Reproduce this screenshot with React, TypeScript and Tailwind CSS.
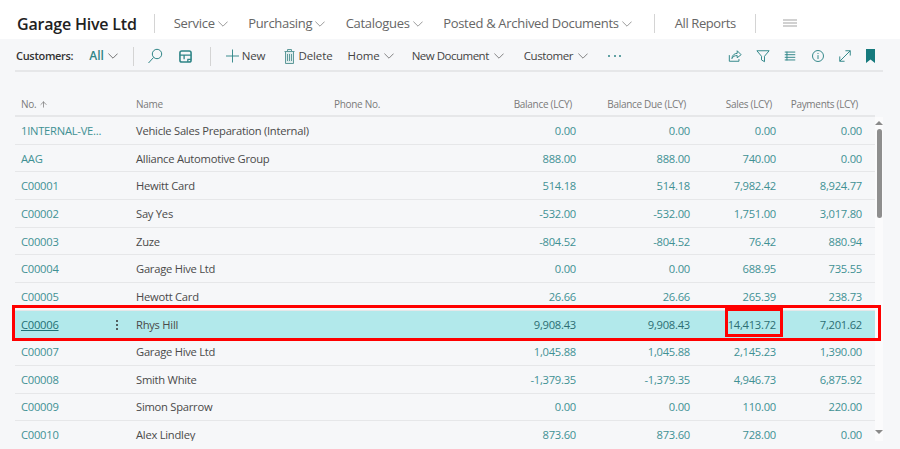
import { ArrowUp } from "lucide-react";

const rows = [
  ["1INTERNAL-VE...", "Vehicle Sales Preparation (Internal)", "0.00", "0.00", "0.00", "0.00"],
  ["AAG", "Alliance Automotive Group", "888.00", "888.00", "740.00", "0.00"],
  ["C00001", "Hewitt Card", "514.18", "514.18", "7,982.42", "8,924.77"],
  ["C00002", "Say Yes", "-532.00", "-532.00", "1,751.00", "3,017.80"],
  ["C00003", "Zuze", "-804.52", "-804.52", "76.42", "880.94"],
  ["C00004", "Garage Hive Ltd", "0.00", "0.00", "688.95", "735.55"],
  ["C00005", "Hewott Card", "26.66", "26.66", "265.39", "238.73"],
  ["C00006", "Rhys Hill", "9,908.43", "9,908.43", "14,413.72", "7,201.62"],
  ["C00007", "Garage Hive Ltd", "1,045.88", "1,045.88", "2,145.23", "1,390.00"],
  ["C00008", "Smith White", "-1,379.35", "-1,379.35", "4,946.73", "6,875.92"],
  ["C00009", "Simon Sparrow", "0.00", "0.00", "110.00", "220.00"],
  ["C00010", "Alex Lindley", "873.60", "873.60", "728.00", "0.00"],
];

const gridCols = "grid grid-cols-[121px_198px_1fr_100px_114px_86px_86px] ";

function Chev({ color = "#8f8f8f" }: { color?: string }) {
  return (
    <svg width="10" height="6" viewBox="0 0 10 6" fill="none" stroke={color} strokeWidth="0.9" className="shrink-0">
      <path d="M.4.6 5 5.2 9.6.6" />
    </svg>
  );
}

function NavItem({ label }: { label: string }) {
  return (
    <span className="flex items-center gap-[3px] text-[13px] tracking-[-0.3px] text-[#666]">
      {label}
      <Chev />
    </span>
  );
}

function Sep({ className = "" }: { className?: string }) {
  return <span className={"h-[19px] w-px shrink-0 bg-[#d4d4d4] " + className} />;
}

function ActionMenu({ label, className = "" }: { label: string; className?: string }) {
  return (
    <span className={"flex items-center " + className}>
      {label}
      <Chev color="#777" />
    </span>
  );
}

function TealIcon({ children, className = "" }: { children: React.ReactNode; className?: string }) {
  return (
    <svg width="14" height="14" viewBox="0 0 16 16" fill="none" stroke="#2f8587" strokeWidth="1.1" className={"shrink-0 " + className}>
      {children}
    </svg>
  );
}

export default function App() {
  return (
    <div className="relative h-[449px] w-[900px] overflow-hidden bg-[#f6f7f9] font-['Open_Sans',sans-serif]">
      <header className="flex h-[39px] items-center bg-white pl-[17px] pt-[8px]">
        <span className="text-[16px] font-semibold tracking-[-0.2px] text-[#212121]">Garage Hive Ltd</span>
        <Sep className="ml-[17px] mr-[19px]" />
        <div className="flex items-center gap-[20.5px]">
          <NavItem label="Service" />
          <NavItem label="Purchasing" />
          <NavItem label="Catalogues" />
          <NavItem label="Posted & Archived Documents" />
        </div>
        <Sep className="ml-[22px] mr-[20px]" />
        <span className="text-[13px] tracking-[-0.4px] text-[#666]">All Reports</span>
        <Sep className="ml-[19px] mr-[27px]" />
        <svg width="14" height="8" viewBox="0 0 14 8" stroke="#a3a3a3" strokeWidth="1" className="-mt-[1px]">
          <path d="M0 1h14M0 4h14M0 7h14" />
        </svg>
      </header>

      <div className="mx-[15px] flex h-[33px] w-[868px] items-center border-b-2 border-[#e6e7e9] pt-[3px] text-[11.5px] tracking-[-0.1px] text-[#444]">
        <span className="ml-[1px] text-[11px] font-semibold tracking-[-0.3px] text-[#333]">Customers:</span>
        <span className="ml-[16px] flex items-center gap-[4px] text-[12px] font-semibold text-[#2f8587]">
          All <Chev color="#666" />
        </span>
        <Sep className="ml-[15px]" />
        <svg width="16" height="16" viewBox="0 0 16 16" fill="none" stroke="#2f8587" className="ml-[13px] shrink-0">
          <circle cx="10" cy="6" r="4.7" />
          <path d="M6.600 9.400 1.500 15" />
        </svg>
        <svg width="13" height="13" viewBox="0 0 14 14" fill="none" stroke="#2f8587" className="ml-[16px] shrink-0">
          <rect x="1" y="1" width="12" height="12" rx="2" strokeWidth="1.7" />
          <path d="M1 5.500h12M5.500 5.500v4.500M9 10h4M9.500 10v3" strokeWidth="1.4" />
        </svg>
        <Sep className="ml-[18px]" />
        <svg width="13" height="14" viewBox="0 0 14 14" stroke="#2f8587" className="ml-[15px] shrink-0">
          <path d="M0 7h14M7 0v14" />
        </svg>
        <span className="ml-[3px]">New</span>
        <svg width="11" height="15" viewBox="0 0 11 15" fill="#dfecec" stroke="#5f9a9b" className="ml-[19px] shrink-0">
          <path d="M.5 2.500h10M3.500 2.500V.5h4v2M1.500 2.500v12h8v-12M3.500 5v7M5.500 5v7M7.500 5v7" />
        </svg>
        <span className="ml-[3px]">Delete</span>
        <ActionMenu label="Home" className="ml-[15px] gap-[4px]" />
        <ActionMenu label="New Document" className="ml-[18px] gap-[5px] tracking-[-0.5px]" />
        <ActionMenu label="Customer" className="ml-[20px] gap-[5px] tracking-[-0.4px]" />
        <span className="ml-[20px] flex gap-[3.500px]">
          <i className="size-[2px] rounded-full bg-[#2f8587]" />
          <i className="size-[2px] rounded-full bg-[#2f8587]" />
          <i className="size-[2px] rounded-full bg-[#2f8587]" />
        </span>
        <div className="ml-auto mr-[8px] flex items-center gap-[13.600px]">
          <TealIcon>
            <path d="M1.500 7v7h11v-2.500M4.500 11c0-4 3-6 6-6V2l4.500 4.500L10.500 10V7.500c-3 0-5 1-6 3.500Z" />
          </TealIcon>
          <TealIcon>
            <path d="M1 2h14L9.700 8.300V14.500L6.300 12.500V8.300Z" />
          </TealIcon>
          <TealIcon>
            <path d="M2 3.500h12M2 6.500h12M2 9.500h12M2 12.500h12M4.500 3v10" />
          </TealIcon>
          <TealIcon>
            <circle cx="8" cy="8" r="6.300" />
            <path d="M8 7v4.500M8 4.500v1.200" />
          </TealIcon>
          <TealIcon>
            <path d="M2 14 14 2M8.500 2H14v5.500M2 8.500V14h5.500" />
          </TealIcon>
          <svg width="9" height="14" viewBox="0 0 9 14" fill="#167a7d">
            <path d="M0 0h9v14L4.500 10.500 0 14Z" />
          </svg>
        </div>
      </div>

      <div className="mx-[15px] mt-[20px] w-[860px]">
        <div className={gridCols + "h-[25px] items-center border-b-2 border-[#e6e7e9] pt-[2px] text-[10px] tracking-[-0.3px] text-[#7a7a7a]"}>
          <span className="flex items-center gap-[3px] pl-[6px]">
            No. <ArrowUp size={9} strokeWidth={2} />
          </span>
          <span>Name</span>
          <span>Phone No.</span>
          <span className="pr-[17px] text-right">Balance (LCY)</span>
          <span className="pr-[17px] text-right">Balance Due (LCY)</span>
          <span className="pr-[17px] text-right">Sales (LCY)</span>
          <span className="pr-[17px] text-right">Payments (LCY)</span>
        </div>
      </div>

      <div className="ml-[15px] flex h-[324px] w-[868px]">
        <div className="w-[860px] shrink-0 overflow-hidden text-[11.2px] tracking-[-0.25px]">
          {rows.map((r) => {
            const selected = r[0] === "C00006";
            return (
              <div
                key={r[0]}
                className={
                  gridCols +
                  "h-[27.67px] items-center border-b pt-[2px] " +
                  (selected ? "border-transparent bg-[#b2e9eb] text-[#2c6e73]" : "border-[#e6e7e9] text-[#3f9194]")
                }
              >
                <span className={"flex items-center justify-between pl-[6px] pr-[18px] " + (selected ? "text-[#1f7175]" : "")}>
                  <span className={selected ? "underline" : ""}>{r[0]}</span>
                  {selected && (
                    <span className="flex flex-col gap-[2px]">
                      <i className="size-[2px] rounded-full bg-[#333]" />
                      <i className="size-[2px] rounded-full bg-[#333]" />
                      <i className="size-[2px] rounded-full bg-[#333]" />
                    </span>
                  )}
                </span>
                <span className="text-[#4a4a4a]">{r[1]}</span>
                <span />
                {r.slice(2).map((v, i) => (
                  <span key={i} className="pr-[13px] text-right">
                    {v}
                  </span>
                ))}
              </div>
            );
          })}
        </div>
        <div className="flex w-[8px] flex-col items-center bg-[#fbfbfc] pt-[4px]">
          <span className="h-0 w-0 border-x-[4px] border-b-[4px] border-x-transparent border-b-[#8a8a8a]" />
          <span className="mt-[4px] h-[89px] w-[5px] rounded-full bg-[#8e8e8e]" />
          <span className="mt-auto mb-[7px] h-0 w-0 border-x-[4px] border-t-[4px] border-x-transparent border-t-[#8a8a8a]" />
        </div>
      </div>

      <div className="absolute left-[12px] top-[305px] h-[36px] w-[869px] border-[3px] border-[#ff0000]" />
      <div className="absolute left-[725px] top-[308px] h-[29px] w-[58px] border-[3px] border-[#ff0000]" />
    </div>
  );
}
